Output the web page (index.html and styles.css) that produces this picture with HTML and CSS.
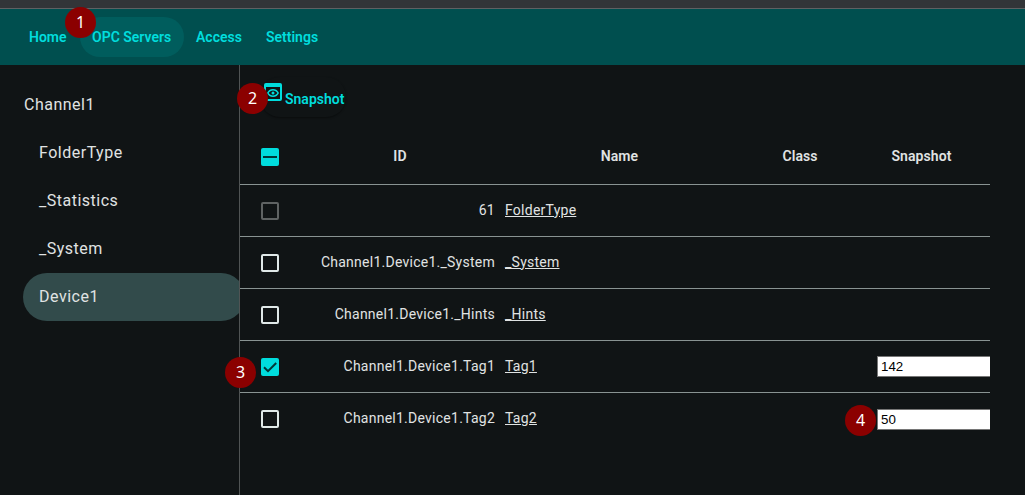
FILE: index.html
```html
<!DOCTYPE html>
<html lang="en">
<head>
<meta charset="utf-8">
<title>OPC Servers</title>
<link rel="stylesheet" href="styles.css">
</head>
<body>
<div class="chrome"></div>
<header class="toolbar">
  <a class="nav home">Home</a>
  <a class="nav active">OPC Servers</a>
  <a class="nav access">Access</a>
  <a class="nav settings">Settings</a>
</header>
<div class="layout">
  <nav class="sidebar">
    <a class="item root"><span>Channel1</span></a>
    <a class="item"><span>FolderType</span></a>
    <a class="item"><span>_Statistics</span></a>
    <a class="item"><span>_System</span></a>
    <a class="item selected"><span>Device1</span></a>
  </nav>
  <main class="content">
    <button class="snapshot">
      <svg class="preview" viewBox="3 3 18 18"><path fill-rule="evenodd" d="M19 3H5a2 2 0 0 0-2 2v14a2 2 0 0 0 2 2h14a2 2 0 0 0 2-2V5a2 2 0 0 0-2-2zm0 16H5V7h14zM12 10.5c1.840 0 3.480.960 4.340 2.500-.860 1.540-2.500 2.500-4.340 2.500S8.520 14.540 7.660 13c.860-1.540 2.500-2.500 4.340-2.500M12 9c-2.730 0-5.060 1.660-6 4 .940 2.340 3.270 4 6 4s5.060-1.660 6-4c-.940-2.340-3.270-4-6-4zm0 5.500a1.500 1.500 0 1 1 0-3 1.500 1.500 0 0 1 0 3z"/></svg>
      <span>Snapshot</span>
    </button>
    <div class="table">
      <div class="row head"><span class="check"><i class="box filled"><svg viewBox="0 0 18 18"><path d="M2 9h14"/></svg></i></span><span>ID</span><span>Name</span><span>Class</span><span class="value">Snapshot</span></div>
      <div class="row"><span class="check"><i class="box disabled"></i></span><span class="id">61</span><a class="name">FolderType</a></div>
      <div class="row"><span class="check"><i class="box"></i></span><span class="id">Channel1.Device1._System</span><a class="name">_System</a></div>
      <div class="row"><span class="check"><i class="box"></i></span><span class="id">Channel1.Device1._Hints</span><a class="name">_Hints</a></div>
      <div class="row"><span class="check"><i class="box filled"><svg viewBox="0 0 18 18"><path d="M3 9.200l4 4L15.200 5"/></svg></i></span><span class="id">Channel1.Device1.Tag1</span><a class="name">Tag1</a><span></span><span class="field">142</span></div>
      <div class="row last"><span class="check"><i class="box"></i></span><span class="id">Channel1.Device1.Tag2</span><a class="name">Tag2</a><span></span><span class="field">50</span></div>
    </div>
  </main>
</div>
<span class="marker m1">1</span>
<span class="marker m2">2</span>
<span class="marker m3">3</span>
<span class="marker m4">4</span>
</body>
</html>
```

FILE: styles.css
```css
* { box-sizing: border-box; }
body {
  margin: 0;
  height: 495px;
  overflow: hidden;
  position: relative;
  background: #101415;
  color: #e0e3e3;
  font: 14px/20px Roboto, sans-serif;
}
.chrome { height: 9px; background: #323538; border-bottom: 1px solid #5f6163; }
.toolbar {
  height: 56px;
  padding-left: 17px;
  display: flex;
  align-items: center;
  background: #004f4f;
}
.nav {
  height: 40px;
  padding: 0 12px;
  border-radius: 20px;
  line-height: 40px;
  color: #00dddd;
  font-weight: 600;
  white-space: nowrap;
}
.home { width: 63px; }
.active { width: 104px; background: #005d5d; }
.access { width: 70px; }
.layout { height: 430px; display: flex; }
.sidebar {
  width: 240px;
  flex: none;
  padding: 16px 0 0 23px;
  overflow: hidden;
  border-right: 1px solid #505454;
}
.item {
  width: 222px;
  height: 48px;
  padding-left: 16px;
  display: flex;
  align-items: center;
  border-radius: 24px;
  font-size: 16px;
  letter-spacing: 0.5px;
}
.root { padding-left: 1px; }
.selected { background: #324b4b; }
.content { width: 750px; flex: none; padding-top: 12px; }
.snapshot {
  width: 86px;
  height: 40px;
  margin-left: 20px;
  padding: 6px 0 0 4px;
  display: flex;
  align-items: flex-start;
  gap: 3px;
  border: 0;
  border-radius: 20px;
  background: #101415;
  box-shadow: 0 1px 2px rgba(0, 0, 0, 0.4);
  color: #00dddd;
  font: 600 14px/20px Roboto, sans-serif;
}
.snapshot span { margin-top: 6px; white-space: nowrap; }
.preview { width: 18px; height: 18px; flex: none; fill: currentColor; }
.table { margin-top: 16px; }
.row {
  height: 52px;
  padding-bottom: 2px;
  display: grid;
  grid-template-columns: 60px 200px 239px 122px 129px;
  align-items: center;
  border-bottom: 1px solid #899392;
  letter-spacing: 0.25px;
}
.head { padding-bottom: 5px; font-weight: 600; letter-spacing: 0.1px; text-align: center; }
.last { border-bottom-color: transparent; }
.check { height: 20px; padding: 2px 0 0 21px; }
.id { padding-right: 5px; text-align: right; white-space: nowrap; }
.name { padding-left: 5px; text-decoration: underline; }
.value { padding-right: 8px; }
.box {
  width: 18px;
  height: 18px;
  display: block;
  border: 2px solid #e0e9e8;
  border-radius: 2px;
}
.disabled { border-color: #5f6363; }
.filled { border: 0; background: #00dddd; }
.filled svg { width: 18px; height: 18px; display: block; fill: none; stroke: #003737; stroke-width: 2; }
.field {
  height: 21px;
  margin: 2px 0 0 16px;
  padding-left: 3px;
  border: 1px solid #767676;
  border-right: 0;
  background: #fff;
  color: #000;
  font: 13.333px/19px "Liberation Sans", Arial, sans-serif;
  letter-spacing: 0;
}
.last .field { margin-top: 3px; }
.marker {
  position: absolute;
  width: 31px;
  height: 31px;
  border-radius: 50%;
  background: #8b0000;
  color: #fff;
  font: 16px/30px "Noto Sans", sans-serif;
  text-align: center;
}
.m1 { left: 65px; top: 7px; }
.m2 { left: 237px; top: 83px; }
.m3 { left: 225px; top: 357px; }
.m4 { left: 845px; top: 405px; }
```
